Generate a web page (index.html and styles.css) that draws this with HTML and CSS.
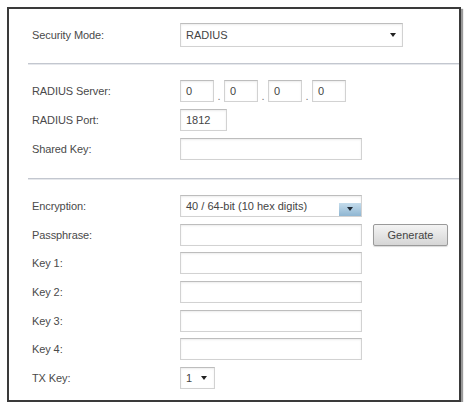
FILE: index.html
```html
<!DOCTYPE html>
<html>
<head>
<meta charset="utf-8">
<link rel="stylesheet" href="styles.css">
</head>
<body>
<div class="panel">
  <div class="section sec-top">
    <div class="row">
      <div class="label">Security Mode:</div>
      <div class="select select-mode"><span class="sel-text">RADIUS</span><span class="tri"></span></div>
    </div>
  </div>
  <div class="sep"></div>
  <div class="section sec-radius">
    <div class="row">
      <div class="label">RADIUS Server:</div>
      <div class="ip">
        <div class="field f-ip">0</div><span class="dot">.</span>
        <div class="field f-ip">0</div><span class="dot">.</span>
        <div class="field f-ip">0</div><span class="dot">.</span>
        <div class="field f-ip">0</div>
      </div>
    </div>
    <div class="row">
      <div class="label">RADIUS Port:</div>
      <div class="field f-port">1812</div>
    </div>
    <div class="row">
      <div class="label">Shared Key:</div>
      <div class="field f-wide"></div>
    </div>
  </div>
  <div class="sep"></div>
  <div class="section sec-wep">
    <div class="row">
      <div class="label">Encryption:</div>
      <div class="select select-enc"><span class="sel-text">40 / 64-bit (10 hex digits)</span><span class="enc-btn"><span class="tri"></span></span></div>
    </div>
    <div class="row">
      <div class="label">Passphrase:</div>
      <div class="field f-wide"></div>
      <div class="button">Generate</div>
    </div>
    <div class="row">
      <div class="label">Key 1:</div>
      <div class="field f-wide"></div>
    </div>
    <div class="row">
      <div class="label">Key 2:</div>
      <div class="field f-wide"></div>
    </div>
    <div class="row">
      <div class="label">Key 3:</div>
      <div class="field f-wide"></div>
    </div>
    <div class="row">
      <div class="label">Key 4:</div>
      <div class="field f-wide"></div>
    </div>
    <div class="row">
      <div class="label">TX Key:</div>
      <div class="select select-tx"><span class="sel-text">1</span><span class="tri"></span></div>
    </div>
  </div>
</div>
</body>
</html>
```

FILE: styles.css
```css
html, body {
  margin: 0;
  padding: 0;
  background: #ffffff;
}
body {
  font-family: "Liberation Sans", Arial, sans-serif;
  font-size: 11px;
  color: #4a4a4a;
}
.panel {
  box-sizing: border-box;
  margin: 7px 0 0 7px;
  width: 454px;
  height: 395px;
  border: 2px solid #3a3a3a;
  box-shadow: 2px 2px 1px #9a9a9a;
  background: #fff;
  padding-left: 19px;
}
.section {
  display: flex;
  flex-direction: column;
  padding-left: 4px;
}
.sec-top {
  padding-top: 14px;
  padding-bottom: 16px;
}
.sec-radius {
  padding-top: 15px;
  padding-bottom: 18px;
  gap: 7px;
}
.sec-wep {
  padding-top: 15px;
  gap: 6.67px;
}
.sep {
  height: 1px;
  border-top: 1px solid #c3c7cf;
  background: #e6e8ec;
}
.row {
  display: flex;
  align-items: center;
  height: 22px;
}
.sec-top .row {
  height: 24px;
}
.label {
  width: 148px;
  flex: none;
  letter-spacing: -0.1px;
}
.field, .select {
  box-sizing: border-box;
  height: 22px;
  border: 1px solid #d2d2d2;
  border-top-color: #bdbdbd;
  box-shadow: inset 0 1px 2px rgba(0,0,0,0.08);
  background: #fff;
  padding-left: 5px;
  display: flex;
  align-items: center;
  color: #444;
}
.f-wide {
  width: 182px;
}
.f-port {
  width: 47px;
}
.ip {
  display: flex;
  align-items: center;
}
.f-ip {
  width: 34px;
}
.dot {
  width: 10px;
  text-align: center;
  align-self: flex-end;
  line-height: 12px;
  color: #777;
}
.select-mode {
  width: 223px;
  height: 24px;
  padding-right: 5px;
}
.sel-text {
  flex: 1;
}
.tri {
  width: 0;
  height: 0;
  border-left: 3.5px solid transparent;
  border-right: 3.5px solid transparent;
  border-top: 4px solid #222;
  margin-right: 1px;
}
.select-enc {
  width: 182px;
  padding-right: 0;
  align-items: stretch;
}
.select-enc .sel-text {
  display: flex;
  align-items: center;
}
.enc-btn {
  align-self: flex-end;
  width: 22px;
  height: 13px;
  background: linear-gradient(#c4dcec, #8fb6d2);
  display: flex;
  align-items: center;
  justify-content: center;
}
.enc-btn .tri {
  margin: 0 0 2px 0;
  border-top-color: #1f2a36;
}
.select-tx {
  width: 35px;
  padding-right: 6px;
}
.button {
  box-sizing: border-box;
  margin-left: 11px;
  width: 75px;
  height: 22px;
  border: 1px solid #9a9a9a;
  border-radius: 2px;
  background: linear-gradient(#f4f4f4, #d6d6d6);
  display: flex;
  align-items: center;
  justify-content: center;
  color: #444;
  box-shadow: 0 1px 1px rgba(0,0,0,0.15);
}
```
